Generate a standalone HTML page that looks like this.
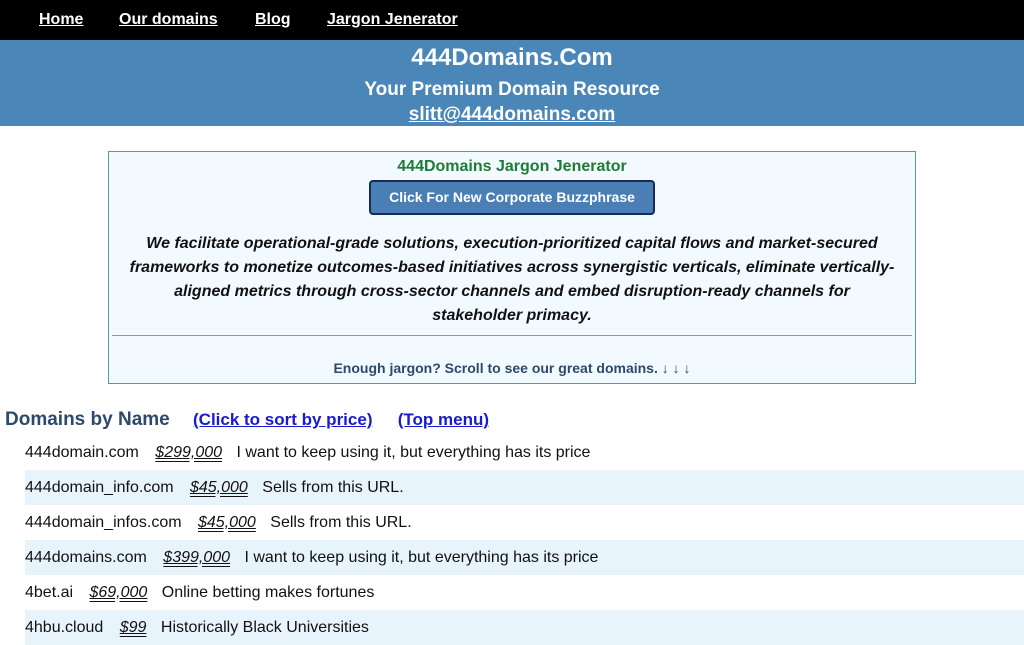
<!DOCTYPE html>
<html><head><meta charset="utf-8"><style>
*{margin:0;padding:0;box-sizing:border-box}
body{width:1024px;height:629px;overflow:hidden;font-family:"Liberation Sans",Arial,sans-serif;background:#fff;color:#111}
.nav{height:40px;background:#000;position:relative}
.nav a{position:absolute;top:11px;color:#fff;font-weight:bold;font-size:16px;text-decoration:underline}
.hdr{height:86px;background:#4a86b8;color:#fff;text-align:center;font-weight:bold}
.hdr .t{font-size:24px;padding-top:4px;line-height:28px}
.hdr .s{font-size:19px;margin-top:7px;line-height:22px}
.hdr .e{font-size:19px;line-height:22px;margin-top:3px;text-decoration:underline}
.box{position:absolute;left:108px;top:151px;width:808px;height:233px;background:#f3faff;border:1px solid #5a9a9a;text-align:center}
.box .g{color:#1e7a35;font-weight:bold;font-size:16px;margin-top:6px;line-height:18px}
.btn{display:inline-block;margin-top:4px;width:286px;height:35px;background:#4a7fb5;border:2px solid #1a2a55;border-radius:4px;color:#fff;font-weight:bold;font-size:14px;line-height:31px}
.j{font-style:italic;font-weight:bold;font-size:16px;line-height:24px;margin:17px 20px 0}
.hr{position:absolute;left:3px;right:3px;top:183px;border-top:1px solid #8a9aa5}
.f{position:absolute;left:0;right:0;top:208px;color:#2c4a6b;font-weight:bold;font-size:14px}
.dh{position:absolute;top:409px;left:5px;font-size:19px;font-weight:bold;color:#2c4a6b}
.dh a{color:#1a1ad0;font-size:17px;margin-left:20px;text-decoration:underline}
.rows{position:absolute;top:435px;left:25px;right:0}
.r{height:35px;line-height:35px;font-size:16px;padding-left:0}
.r:nth-child(even){background:#e8f4fc}
.r i{text-decoration:underline double;margin:0 10px 0 12px}
</style></head><body>
<div class="nav"><a style="left:39px">Home</a><a style="left:119px">Our domains</a><a style="left:255px">Blog</a><a style="left:327px">Jargon Jenerator</a></div>
<div class="hdr"><div class="t">444Domains.Com</div><div class="s">Your Premium Domain Resource</div><div class="e">slitt@444domains.com</div></div>
<div class="box"><div class="g">444Domains Jargon Jenerator</div><div class="btn">Click For New Corporate Buzzphrase</div>
<div class="j">We facilitate operational-grade solutions, execution-prioritized capital flows and market-secured frameworks to monetize outcomes-based initiatives across synergistic verticals, eliminate vertically-aligned metrics through cross-sector channels and embed disruption-ready channels for stakeholder primacy.</div>
<div class="hr"></div><div class="f">Enough jargon? Scroll to see our great domains. ↓ ↓ ↓</div></div>
<div class="dh">Domains by Name <a style="margin-left:18px">(Click to sort by price)</a> <a>(Top menu)</a></div>
<div class="rows">
<div class="r">444domain.com <i>$299,000</i> I want to keep using it, but everything has its price</div>
<div class="r">444domain_info.com <i>$45,000</i> Sells from this URL.</div>
<div class="r">444domain_infos.com <i>$45,000</i> Sells from this URL.</div>
<div class="r">444domains.com <i>$399,000</i> I want to keep using it, but everything has its price</div>
<div class="r">4bet.ai <i>$69,000</i> Online betting makes fortunes</div>
<div class="r">4hbu.cloud <i>$99</i> Historically Black Universities</div>
</div>
</body></html>
